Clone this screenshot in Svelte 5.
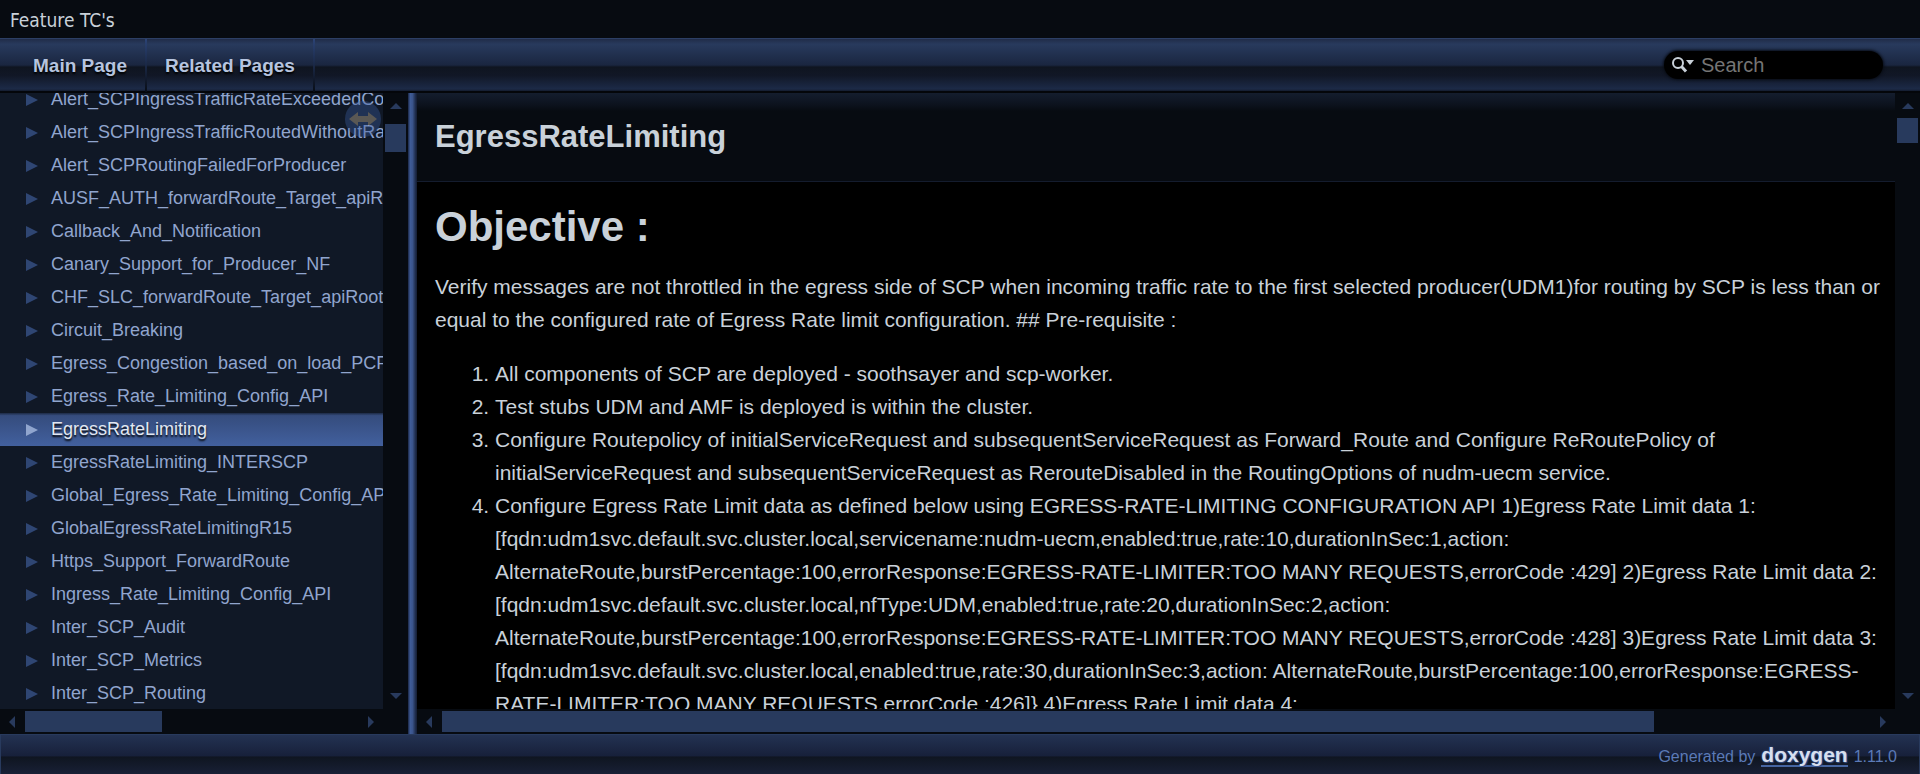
<script>
    let search = '';
    let selected = 'EgressRateLimiting';

    const tabs = ['Main Page', 'Related Pages'];

    const pages = [
        'Alert_SCPIngressTrafficRateExceededConfigured',
        'Alert_SCPIngressTrafficRoutedWithoutRateLimit',
        'Alert_SCPRoutingFailedForProducer',
        'AUSF_AUTH_forwardRoute_Target_apiRoot',
        'Callback_And_Notification',
        'Canary_Support_for_Producer_NF',
        'CHF_SLC_forwardRoute_Target_apiRoot',
        'Circuit_Breaking',
        'Egress_Congestion_based_on_load_PCF',
        'Egress_Rate_Limiting_Config_API',
        'EgressRateLimiting',
        'EgressRateLimiting_INTERSCP',
        'Global_Egress_Rate_Limiting_Config_API',
        'GlobalEgressRateLimitingR15',
        'Https_Support_ForwardRoute',
        'Ingress_Rate_Limiting_Config_API',
        'Inter_SCP_Audit',
        'Inter_SCP_Metrics',
        'Inter_SCP_Routing'
    ];

    const steps = [
        'All components of SCP are deployed - soothsayer and scp-worker.',
        'Test stubs UDM and AMF is deployed is within the cluster.',
        'Configure Routepolicy of initialServiceRequest and subsequentServiceRequest as Forward_Route and Configure ReRoutePolicy of initialServiceRequest and subsequentServiceRequest as RerouteDisabled in the RoutingOptions of nudm-uecm service.',
        'Configure Egress Rate Limit data as defined below using EGRESS-RATE-LIMITING CONFIGURATION API 1)Egress Rate Limit data 1: [fqdn:udm1svc.default.svc.cluster.local,servicename:nudm-uecm,enabled:true,rate:10,durationInSec:1,action: AlternateRoute,burstPercentage:100,errorResponse:EGRESS-RATE-LIMITER:TOO MANY REQUESTS,errorCode :429] 2)Egress Rate Limit data 2: [fqdn:udm1svc.default.svc.cluster.local,nfType:UDM,enabled:true,rate:20,durationInSec:2,action: AlternateRoute,burstPercentage:100,errorResponse:EGRESS-RATE-LIMITER:TOO MANY REQUESTS,errorCode :428] 3)Egress Rate Limit data 3: [fqdn:udm1svc.default.svc.cluster.local,enabled:true,rate:30,durationInSec:3,action: AlternateRoute,burstPercentage:100,errorResponse:EGRESS-RATE-LIMITER:TOO MANY REQUESTS,errorCode :426]} 4)Egress Rate Limit data 4:'
    ];
</script>

{#snippet arrow(points)}
    <svg class="arrow" viewBox="0 0 12 12" aria-hidden="true"><polygon {points} /></svg>
{/snippet}

{#snippet scrollbarY(start, size)}
    <div class="scroll-y">
        {@render arrow('0,9 6,3 12,9')}
        <div class="track">
            <div class="thumb" style="top: {start}%; height: {size}%"></div>
        </div>
        {@render arrow('0,3 6,9 12,3')}
    </div>
{/snippet}

{#snippet scrollbarX(start, size)}
    <div class="scroll-x">
        {@render arrow('9,0 3,6 9,12')}
        <div class="track">
            <div class="thumb" style="left: {start}%; width: {size}%"></div>
        </div>
        {@render arrow('3,0 9,6 3,12')}
    </div>
{/snippet}

<div class="page">
    <header class="title-area">Feature TC's</header>

    <nav class="main-nav">
        <ul>
            {#each tabs as tab}
                <li><a href="#top">{tab}</a></li>
            {/each}
        </ul>

        <div class="search-box">
            <svg class="mag" viewBox="0 0 24 18" aria-hidden="true">
                <circle cx="7" cy="7" r="5" />
                <path class="handle" d="M10.5 10.5 L15 15.5" />
                <path class="caret" d="M15 4 H23 L19 9 Z" />
            </svg>
            <input type="text" placeholder="Search" aria-label="Search" bind:value={search} />
        </div>
    </nav>

    <div class="body">
        <aside class="pane side">
            <div class="view">
                <ul class="tree">
                    {#each pages as page}
                        <li class:selected={page === selected}>
                            <svg class="expand" viewBox="0 0 12 12" aria-hidden="true"><path d="M0 0 L12 6 L0 12 Z" /></svg>
                            <a href="#{page}" on:click={() => (selected = page)}>{page}</a>
                        </li>
                    {/each}
                </ul>
            </div>
            {@render scrollbarY(1, 5)}
            {@render scrollbarX(0, 41)}
            <button class="sync" aria-label="Toggle panel synchronisation">
                <svg viewBox="0 0 36 36" aria-hidden="true">
                    <path d="M4 18 L13 11 V15 H23 V11 L32 18 L23 25 V21 H13 V25 Z" />
                </svg>
            </button>
        </aside>

        <div class="splitter"></div>

        <main class="pane doc">
            <div class="view">
                <div class="doc-header">
                    <h1>EgressRateLimiting</h1>
                </div>
                <div class="contents">
                    <h2>Objective :</h2>
                    <p>
                        Verify messages are not throttled in the egress side of SCP when incoming traffic rate to the first
                        selected producer(UDM1)for routing by SCP is less than or equal to the configured rate of Egress Rate
                        limit configuration. ## Pre-requisite :
                    </p>
                    <ol>
                        {#each steps as step}
                            <li>{step}</li>
                        {/each}
                    </ol>
                </div>
            </div>
            {@render scrollbarY(0, 4.4)}
            {@render scrollbarX(0, 84.9)}
        </main>
    </div>

    <footer>
        <span>Generated by</span>
        <a class="logo" href="#doxygen">doxygen</a>
        <span>1.11.0</span>
    </footer>
</div>

<style>
    :global(body) {
        margin: 0;
        background: #000;
    }

    .page {
        display: flex;
        flex-direction: column;
        height: 100vh;
        overflow: hidden;
        color: #c9d1d9;
        font: 21px/33px "Liberation Sans", Arial, sans-serif;
    }

    ul {
        list-style: none;
        margin: 0;
        padding: 0;
    }

    a {
        color: inherit;
        text-decoration: none;
    }

    .title-area {
        padding: 5px 10px 3px;
        background: #070b11;
        border-bottom: 1px solid #2c3f65;
        font: 19px/30px Tahoma, "DejaVu Sans Condensed", "Noto Sans", sans-serif;
    }

    .main-nav {
        display: flex;
        justify-content: space-between;
        align-items: center;
        flex: none;
        height: 52px;
        border-bottom: 2px solid #04060a;
        background: linear-gradient(#202c48, #283a5d 10%, #1a2640 50%, #0f1520 54%, #111726 70%, #1c2a47 96%, #141c2e);
    }

    .main-nav ul {
        display: flex;
        padding-left: 15px;
    }

    .main-nav li {
        padding: 1px 18px 0;
        border-right: 2px solid;
        border-image: linear-gradient(#2c4477, #080c14) 1;
        color: #b6c4df;
        font-size: 19px;
        font-weight: bold;
        line-height: 52px;
        text-shadow: 0 2px 2px #000;
    }

    .search-box {
        display: flex;
        align-items: center;
        gap: 6px;
        width: 219px;
        height: 28px;
        margin-right: 37px;
        padding-left: 7px;
        box-sizing: border-box;
        border-radius: 14px;
        background: #000;
        box-shadow: 0 0 3px 1px #080c14;
    }

    .mag {
        flex: none;
        width: 24px;
        height: 18px;
        fill: none;
        stroke: #c9d1d9;
        stroke-width: 2;
    }

    .mag .handle {
        stroke-width: 3;
    }

    .mag .caret {
        fill: #c9d1d9;
        stroke: none;
    }

    .search-box input {
        flex: 1;
        min-width: 0;
        padding: 0;
        border: 0;
        outline: 0;
        background: none;
        color: #c9d1d9;
        font: 20px "Liberation Sans", Arial, sans-serif;
    }

    .search-box input::placeholder {
        color: #757575;
    }

    .body {
        display: flex;
        flex: 1;
        min-height: 0;
    }

    /* viewport with a scrollbar on the right and one below */
    .pane {
        display: grid;
        grid-template: minmax(0, 1fr) 25px / minmax(0, 1fr) 25px;
        position: relative;
        background: #070b11;
    }

    .view {
        overflow: hidden;
    }

    .side {
        flex: none;
        width: 408px;
    }

    .side .view {
        background: #101826;
    }

    .doc {
        flex: 1;
        min-width: 0;
    }

    .doc .view {
        background: #000;
    }

    .tree {
        margin-top: -10px;
    }

    .tree li {
        display: flex;
        align-items: center;
        gap: 13px;
        height: 33px;
        padding-left: 26px;
        color: #90a5ce;
        font-size: 18px;
        white-space: nowrap;
    }

    .expand {
        flex: none;
        width: 12px;
        height: 12px;
        fill: #2f4673;
    }

    .tree .selected {
        background: linear-gradient(#1d2a45, #354c7d 8%, #42609e);
        color: #e2e8f2;
        text-shadow: 0 2px 2px #000;
    }

    .selected .expand {
        fill: #90a5ce;
    }

    .sync {
        position: absolute;
        top: 8px;
        right: 27px;
        width: 36px;
        height: 36px;
        padding: 0;
        border: 0;
        border-radius: 50%;
        background: #3a5a9a;
        opacity: 0.4;
    }

    .sync svg {
        display: block;
        fill: #c8b89a;
    }

    .splitter {
        flex: none;
        width: 9px;
        background: linear-gradient(90deg, #1a2644, #3f5c98 25%, #3a548b 50%, #1d2a48 85%, #141d33);
        cursor: ew-resize;
    }

    .scroll-y,
    .scroll-x {
        display: flex;
        align-items: center;
    }

    .scroll-y {
        flex-direction: column;
        padding: 7px 0;
    }

    .scroll-x {
        padding: 0 6px;
    }

    .arrow {
        flex: none;
        width: 12px;
        height: 12px;
        fill: #283a5d;
    }

    .track {
        flex: 1;
        position: relative;
        align-self: stretch;
    }

    .scroll-y .track {
        margin: 6px 2px;
    }

    .scroll-x .track {
        margin: 2px 7px;
    }

    .thumb {
        position: absolute;
        inset: 0;
        background: #283a5d;
    }

    .doc-header {
        padding: 25px 18px;
        border-bottom: 1px solid #141c2e;
        background: linear-gradient(#141d2e, #0c121d 12px, #070b11 18px);
    }

    h1 {
        margin: 0;
        font-size: 31px;
        line-height: 38px;
    }

    .contents {
        padding: 0 12px 0 18px;
    }

    h2 {
        margin: 22px 0 20px;
        font-size: 42px;
        line-height: 46px;
    }

    p {
        margin: 0 0 21px;
    }

    ol {
        margin: 0;
        padding-left: 60px;
    }

    footer {
        display: flex;
        justify-content: flex-end;
        align-items: center;
        gap: 6px;
        flex: none;
        height: 36px;
        padding: 3px 22px 0 0;
        border: 1px solid #283a5d;
        border-bottom: 0;
        background: linear-gradient(#233252, #17203a 54%, #0f1520 56%, #182036);
        color: #5b7ab7;
        font-size: 16px;
    }

    .logo {
        border-bottom: 2px solid #4665a2;
        color: #d7dfee;
        font-size: 21px;
        font-weight: bold;
        line-height: 20px;
        text-shadow: 0 0 2px #4665a2, 1px 1px 1px #2c4477;
    }
</style>
